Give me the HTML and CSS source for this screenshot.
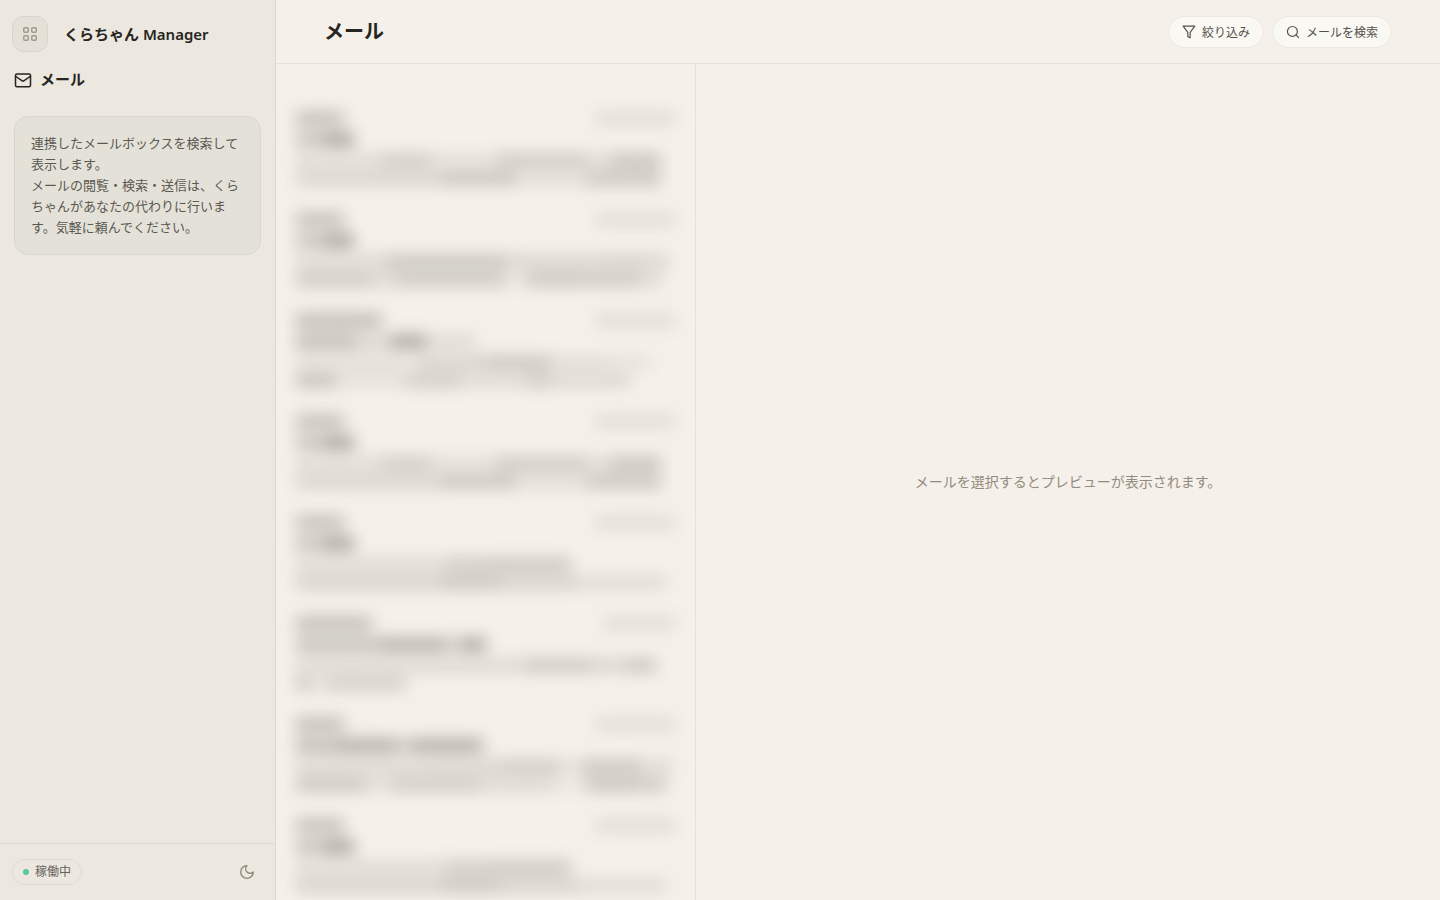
FILE: index.html
```html
<!DOCTYPE html>
<html lang="ja">
<head>
<meta charset="utf-8">
<meta name="viewport" content="width=device-width, initial-scale=1">
<title>メール</title>
<link rel="stylesheet" href="styles.css">
</head>
<body>
<div class="app">
  <aside class="sidebar">
    <div class="brand">
      <button class="apps-button" type="button" aria-label="メニュー">
        <svg class="icon" width="16" height="16" viewBox="0 0 16 16"><g stroke-width="1.5"><rect x="1.750" y="1.750" width="4.500" height="4.500" rx="1"/><rect x="9.750" y="1.750" width="4.500" height="4.500" rx="1"/><rect x="1.750" y="9.750" width="4.500" height="4.500" rx="1"/><rect x="9.750" y="9.750" width="4.500" height="4.500" rx="1"/></g></svg>
      </button>
      <span class="brand-name">くらちゃん Manager</span>
    </div>
    <h2 class="section-title">
      <svg class="icon" width="18" height="18" viewBox="0 0 24 24"><rect x="2" y="4" width="20" height="17" rx="2"/><path d="m22 7-8.97 6.2a2 2 0 0 1-2.06 0L2 7"/></svg>
      メール
    </h2>
    <p class="note">連携したメールボックスを検索して表示します。<br>メールの閲覧・検索・送信は、くらちゃんがあなたの代わりに行います。気軽に頼んでください。</p>
    <footer class="sidebar-footer">
      <span class="status"><span class="status-dot"></span>稼働中</span>
      <button class="theme-button" type="button" aria-label="テーマ切替">
        <svg class="icon" width="16" height="16" viewBox="0 0 24 24"><path d="M12 2.5a6.7 6.7 0 0 0 9.5 9.5A9.5 9.5 0 1 1 12 2.5Z"/></svg>
      </button>
    </footer>
  </aside>
  <main class="main">
    <header class="topbar">
      <h1 class="page-title">メール</h1>
      <div class="actions">
        <button class="pill" type="button">
          <svg class="icon" width="14" height="14" viewBox="0 0 24 24"><path d="M22 2H2l8 10.500V20l4 2v-9.500Z"/></svg>
          絞り込み
        </button>
        <button class="pill" type="button">
          <svg class="icon" width="14" height="14" viewBox="0 0 24 24"><circle cx="11" cy="11" r="8.500"/><path d="m21.500 21.500-4.500-4.500"/></svg>
          メールを検索
        </button>
      </div>
    </header>
    <div class="content">
      <div class="mail-list" id="mail-list" aria-hidden="true"></div>
      <section class="preview"><p class="preview-empty">メールを選択するとプレビューが表示されます。</p></section>
    </div>
  </main>
</div>
<script src="app.js"></script>
</body>
</html>
```

FILE: styles.css
```css
* { box-sizing: border-box; }

body {
  margin: 0;
  background: #f5f0e9;
  color: #262522;
  font-family: Inter, "Noto Sans CJK JP", sans-serif;
  font-size: 14px;
}

h1, h2, p { margin: 0; }
button { font-family: inherit; cursor: pointer; }

.icon {
  flex: none;
  fill: none;
  stroke: currentColor;
  stroke-width: 2;
  stroke-linecap: round;
  stroke-linejoin: round;
}

.app { display: flex; height: 100vh; overflow: hidden; }

.sidebar {
  display: flex;
  flex-direction: column;
  flex: none;
  width: 276px;
  background: #ece7df;
  border-right: 1px solid #dcd8d0;
}

.brand { display: flex; align-items: center; gap: 16px; padding: 16px 12px 0; }

.apps-button {
  display: grid;
  place-items: center;
  width: 36px;
  height: 36px;
  padding: 0;
  border: 1px solid #d8d5ca;
  border-radius: 12px;
  background: #e5e1d8;
  color: #a19b8f;
}

.brand-name {
  font-family: "Noto Sans", "Noto Sans CJK JP", sans-serif;
  font-size: 15px;
  font-weight: 600;
  line-height: 24px;
}

.section-title {
  display: flex;
  align-items: center;
  gap: 8px;
  padding: 16px 14px 0;
  font-size: 15px;
  font-weight: 600;
  line-height: 24px;
}

.note {
  margin: 24px 14px 0;
  padding: 16px;
  border: 1px solid #d8d9cc;
  border-radius: 14px;
  background: #e4e2d8;
  color: #5c5852;
  font-size: 13px;
  line-height: 21px;
}

.sidebar-footer {
  display: flex;
  align-items: center;
  justify-content: space-between;
  margin-top: auto;
  padding: 12px;
  border-top: 1px solid #dcd8d0;
}

.status {
  display: flex;
  align-items: center;
  gap: 6px;
  padding: 3px 10px;
  border: 1px solid #dfdbd2;
  border-radius: 13px;
  color: #66625c;
  font-size: 12px;
  line-height: 18px;
}

.status-dot { width: 6px; height: 6px; border-radius: 50%; background: #54cb9b; }

.theme-button {
  display: grid;
  place-items: center;
  width: 32px;
  height: 32px;
  padding: 0;
  border: 0;
  background: none;
  color: #8d867b;
}

.main { display: flex; flex: 1; flex-direction: column; min-width: 0; }

.topbar {
  display: flex;
  align-items: center;
  justify-content: space-between;
  height: 64px;
  flex: none;
  padding: 0 48px;
  border-bottom: 1px solid #e6e1da;
}

.page-title { font-size: 20px; font-weight: 700; line-height: 28px; }
.actions { display: flex; gap: 8px; }

.pill {
  display: flex;
  align-items: center;
  gap: 6px;
  height: 32px;
  padding: 0 13px;
  border: 1px solid #ebe8e2;
  border-radius: 16px;
  background: #faf8f3;
  color: #55514b;
  font-size: 12px;
}

.content { display: flex; flex: 1; min-height: 0; }

.mail-list {
  flex: none;
  width: 420px;
  padding: 48px 20px 0;
  overflow: hidden;
  border-right: 1px solid #e6e1da;
}

.mail { height: 101px; filter: blur(8px); }
.mail-head { display: flex; justify-content: space-between; }
.mail-line { display: flex; height: 18px; }
.mail-head, .mail-subject { margin-bottom: 3px; }
.bar { height: 13px; background: #45443e; }

.preview { display: grid; flex: 1; place-items: center; min-width: 0; }
.preview-empty { color: #938c80; font-size: 14px; line-height: 22px; }
```

FILE: app.js
```js
// Every bar is [width in px, ink strength in percent].
const systemA = {
  sender: [[48, 30]], subject: [[28, 28], [30, 46]], date: 80,
  lines: [[[85, 12], [50, 22], [65, 10], [90, 23], [25, 13], [50, 27]],
          [[145, 17], [75, 26], [70, 11], [75, 25]]]
};
const systemB = {
  sender: [[48, 30]], subject: [[28, 28], [30, 46]], date: 80,
  lines: [[[150, 13], [40, 22], [85, 24]],
          [[145, 18], [60, 25], [75, 18], [90, 12]]]
};
const mails = [
  systemA,
  {
    sender: [[48, 30]], subject: [[28, 28], [30, 46]], date: 80,
    lines: [[[90, 14], [120, 26], [105, 16], [32, 19], [26, 15]],
            [[75, 24], [25, 15], [110, 23], [20, 6], [60, 25], [55, 23], [22, 13]]]
  },
  {
    sender: [[86, 32]], subject: [[60, 33], [35, 17], [35, 44], [50, 13]], date: 80,
    lines: [[[110, 11], [10, 4], [70, 18], [65, 25], [60, 11], [40, 8]],
            [[40, 28], [70, 9], [55, 21], [65, 12], [25, 22], [80, 14]]]
  },
  systemA,
  systemB,
  {
    sender: [[76, 31]], subject: [[85, 29], [65, 38], [15, 20], [25, 43]], date: 72,
    lines: [[[230, 14], [65, 24], [35, 16], [30, 25]], [[15, 24], [15, 8], [80, 20]]]
  },
  {
    sender: [[48, 31]], subject: [[40, 32], [60, 40], [15, 22], [72, 40]], date: 80,
    lines: [[[130, 15], [75, 17], [60, 22], [20, 8], [60, 25], [32, 12]],
            [[70, 25], [25, 10], [90, 22], [75, 14], [30, 5], [50, 26], [30, 23]]]
  },
  systemB
];

function line(bars, className) {
  const row = document.createElement("div");
  row.className = "mail-line " + className;
  for (const [width, ink] of bars) {
    const bar = document.createElement("span");
    bar.className = "bar";
    bar.style.width = width + "px";
    bar.style.opacity = ink / 100;
    row.append(bar);
  }
  return row;
}

const list = document.getElementById("mail-list");
for (const mail of mails) {
  const item = document.createElement("div");
  item.className = "mail";
  const head = document.createElement("div");
  head.className = "mail-head";
  head.append(line(mail.sender, ""), line([[mail.date, 11]], ""));
  item.append(head, line(mail.subject, "mail-subject"));
  for (const bars of mail.lines) item.append(line(bars, ""));
  list.append(item);
}
```
